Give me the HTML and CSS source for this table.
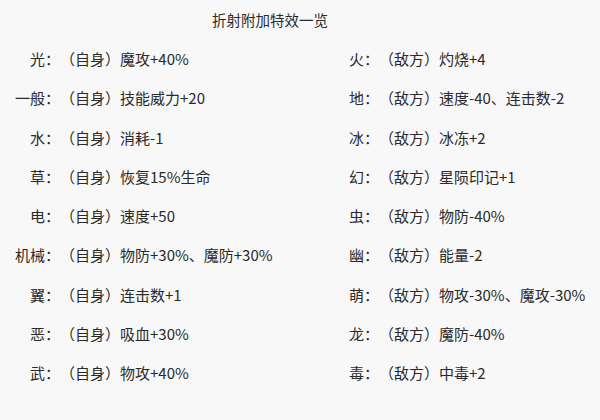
FILE: index.html
```html
<!DOCTYPE html>
<html lang="zh-CN">
<head>
<meta charset="utf-8">
<title>折射附加特效一览</title>
<link rel="stylesheet" href="styles.css">
</head>
<body>
<div class="page">
  <div class="title">折射附加特效一览</div>
  <div class="table">
    <div class="lab">光：</div><div class="desc">（自身）魔攻+40%</div><div class="right">火：（敌方）灼烧+4</div>
    <div class="lab">一般：</div><div class="desc">（自身）技能威力+20</div><div class="right">地：（敌方）速度-40、连击数-2</div>
    <div class="lab">水：</div><div class="desc">（自身）消耗-1</div><div class="right">冰：（敌方）冰冻+2</div>
    <div class="lab">草：</div><div class="desc">（自身）恢复15%生命</div><div class="right">幻：（敌方）星陨印记+1</div>
    <div class="lab">电：</div><div class="desc">（自身）速度+50</div><div class="right">虫：（敌方）物防-40%</div>
    <div class="lab">机械：</div><div class="desc">（自身）物防+30%、魔防+30%</div><div class="right">幽：（敌方）能量-2</div>
    <div class="lab">翼：</div><div class="desc">（自身）连击数+1</div><div class="right">萌：（敌方）物攻-30%、魔攻-30%</div>
    <div class="lab">恶：</div><div class="desc">（自身）吸血+30%</div><div class="right">龙：（敌方）魔防-40%</div>
    <div class="lab">武：</div><div class="desc">（自身）物攻+40%</div><div class="right">毒：（敌方）中毒+2</div>
  </div>
</div>
</body>
</html>
```
FILE: styles.css
```css
html, body {
  margin: 0;
  padding: 0;
  background: #f8f8f8;
}
body {
  width: 600px;
  height: 420px;
  overflow: hidden;
  font-family: "Noto Sans CJK SC", "Noto Sans", sans-serif;
  font-size: 15px;
  color: #2a2a2a;
  text-spacing-trim: space-all;
}
.page {
  padding-top: 0;
}
.title {
  height: 39px;
  line-height: 39px;
  padding-left: 212px;
  font-size: 14.5px;
}
.table {
  display: grid;
  grid-template-columns: 60px 289px 1fr;
  grid-auto-rows: 39.25px;
  align-items: center;
  white-space: nowrap;
}
.lab {
  text-align: right;
}
```
